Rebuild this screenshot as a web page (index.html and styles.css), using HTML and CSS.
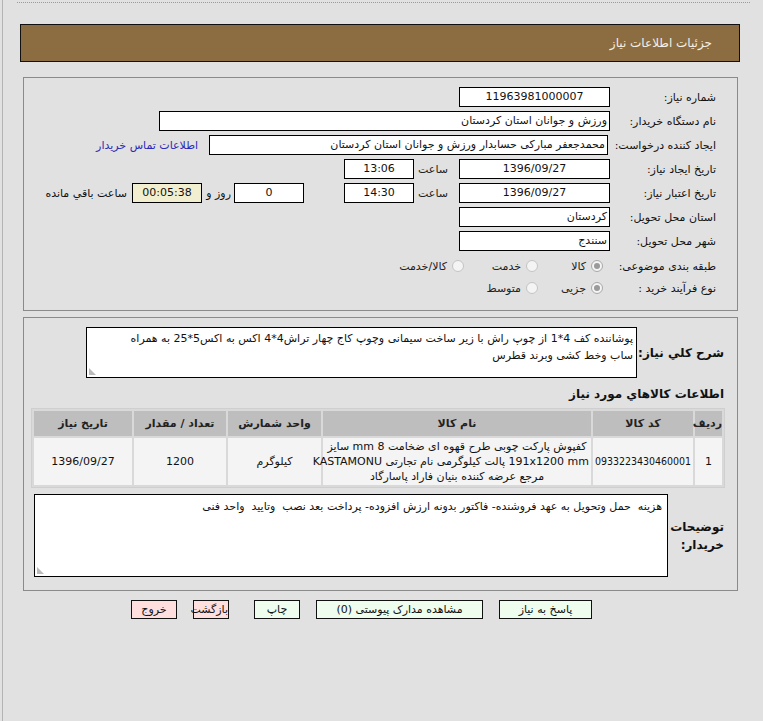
FILE: index.html
```html
<!DOCTYPE html>
<html lang="fa" dir="rtl">
<head>
<meta charset="utf-8">
<title>جزئیات اطلاعات نیاز</title>
<link rel="stylesheet" href="styles.css">
</head>
<body>
<div class="frame">
  <div class="dots"></div>
  <div class="content">
    <div class="header">جزئیات اطلاعات نیاز</div>

    <div class="box box-info">
      <div class="row">
        <span class="lbl">شماره نیاز:</span>
        <span class="field w150 center">11963981000007</span>
      </div>
      <div class="row">
        <span class="lbl">نام دستگاه خریدار:</span>
        <span class="field w451">ورزش و جوانان استان کردستان</span>
      </div>
      <div class="row">
        <span class="lbl lbl-wide">ایجاد کننده درخواست:</span>
        <span class="field w399">محمدجعفر مبارکی حسابدار ورزش و جوانان استان کردستان</span>
        <a class="link" href="#">اطلاعات تماس خریدار</a>
      </div>
      <div class="row">
        <span class="lbl">تاریخ ایجاد نیاز:</span>
        <span class="field w150 center">1396/09/27</span>
        <span class="sep">ساعت</span>
        <span class="field w70 center">13:06</span>
      </div>
      <div class="row">
        <span class="lbl">تاریخ اعتبار نیاز:</span>
        <span class="field w150 center">1396/09/27</span>
        <span class="sep">ساعت</span>
        <span class="field w70 center">14:30</span>
        <span class="field w70 center days">0</span>
        <span class="sep2">روز و</span>
        <span class="field w70 center timer">00:05:38</span>
        <span class="sep3">ساعت باقي مانده</span>
      </div>
      <div class="row">
        <span class="lbl">استان محل تحویل:</span>
        <span class="field w150">کردستان</span>
      </div>
      <div class="row">
        <span class="lbl">شهر محل تحویل:</span>
        <span class="field w150">سنندج</span>
      </div>
      <div class="row radio-row first-radio">
        <span class="lbl">طبقه بندی موضوعی:</span>
        <span class="opt o1"><span class="radio checked"></span><span class="opt-text">کالا</span></span>
        <span class="opt o2"><span class="radio"></span><span class="opt-text">خدمت</span></span>
        <span class="opt"><span class="radio"></span><span class="opt-text">کالا/خدمت</span></span>
      </div>
      <div class="row radio-row">
        <span class="lbl">نوع فرآیند خرید :</span>
        <span class="opt o1"><span class="radio checked"></span><span class="opt-text">جزیی</span></span>
        <span class="opt o2"><span class="radio"></span><span class="opt-text">متوسط</span></span>
      </div>
    </div>

    <div class="box box-items">
      <div class="desc-row">
        <span class="blbl desc-lbl">شرح كلي نياز:</span>
        <div class="area desc-area">پوشاننده کف 4*1 از چوپ راش با زیر ساخت سیمانی وچوپ کاج چهار تراش4*4 اکس به اکس5*25 به همراه<br>ساب وخط کشی وبرند قطرس<span class="grip"></span></div>
      </div>
      <div class="heading">اطلاعات كالاهاي مورد نياز</div>
      <table class="items">
        <thead>
          <tr>
            <th class="c1">رديف</th>
            <th class="c2">کد کالا</th>
            <th class="c3">نام کالا</th>
            <th class="c4">واحد شمارش</th>
            <th class="c5">تعداد / مقدار</th>
            <th class="c6">تاريخ نياز</th>
          </tr>
        </thead>
        <tbody>
          <tr>
            <td>1</td>
            <td class="code">0933223430460001</td>
            <td class="name">کفپوش پارکت چوبی طرح قهوه ای ضخامت 8 mm سایز<br><bdi>191x1200 mm</bdi> پالت کیلوگرمی نام تجارتی KASTAMONU<br>مرجع عرضه کننده بنیان فاراد پاسارگاد</td>
            <td>کیلوگرم</td>
            <td>1200</td>
            <td>1396/09/27</td>
          </tr>
        </tbody>
      </table>
      <div class="notes-row">
        <span class="blbl notes-lbl">توضیحات خریدار:</span>
        <div class="area notes-area">هزینه&nbsp; حمل وتحویل به عهد فروشنده- فاکتور بدونه ارزش افزوده- پرداخت بعد نصب&nbsp; وتایید&nbsp; واحد فنی<span class="grip"></span></div>
      </div>
    </div>

    <div class="buttons">
      <span class="btn green b1">پاسخ به نیاز</span>
      <span class="btn green b2">مشاهده مدارک پیوستی (0)</span>
      <span class="btn green b3">چاپ</span>
      <span class="btn pink b4">بازگشت</span>
      <span class="btn pink b5">خروج</span>
    </div>
  </div>
</div>
</body>
</html>
```

FILE: styles.css
```css
* { box-sizing: border-box; }

html, body {
  margin: 0;
  padding: 0;
  background: #e1e1e1;
}

body {
  font-family: "DejaVu Sans", Tahoma, sans-serif;
  font-size: 11px;
  color: #111;
}

.frame {
  margin-left: 2px;
  border-left: 1px solid #b4b4b4;
  min-height: 721px;
  padding-top: 2px;
}

.dots {
  height: 1px;
  margin: 0 13px 0 14px;
  border-top: 1px dotted #9a9a9a;
}

.content {
  width: 720px;
  margin-right: 23px;
  margin-top: 21px;
}

.header {
  height: 38px;
  background: #8c6d41;
  border: 1px solid #111;
  color: #f4f0e8;
  font-size: 12px;
  line-height: 36px;
  padding-right: 27px;
}

.box {
  margin: 15px 2px 0 3px;
  border: 1px solid #8a8a8a;
}

.box-info {
  padding: 9px 21px 11px 0;
}

.row {
  display: flex;
  align-items: center;
  height: 20px;
  margin-bottom: 4px;
}

.lbl {
  width: 106px;
  flex: none;
  white-space: nowrap;
}

.lbl-wide { width: 108px; }

.field {
  flex: none;
  height: 20px;
  line-height: 18px;
  border: 1px solid #000;
  background: #fff;
  padding: 0 2px;
  white-space: nowrap;
  overflow: hidden;
}

.center { text-align: center; }

.w150 { width: 151px; }
.w451 { width: 451px; }
.w399 { width: 399px; }
.w70 { width: 70px; }

.link {
  color: #2a2ab8;
  text-decoration: none;
  margin-right: 11px;
  white-space: nowrap;
}

.sep {
  width: 45px;
  padding-right: 11px;
  flex: none;
  color: #222;
}

.days { margin-right: 40px; }

.sep2 {
  width: 32px;
  padding-right: 3px;
  flex: none;
}

.timer {
  background: #f1efcf;
}

.sep3 {
  padding-right: 5px;
  white-space: nowrap;
}

.radio-row {
  height: 22px;
  margin-bottom: 0;
}

.first-radio { margin-top: 2px; }

.opt {
  display: flex;
  align-items: center;
  flex: none;
}

.o1 { width: 65px; }
.o2 { width: 74px; }

.radio {
  width: 12px;
  height: 12px;
  border-radius: 50%;
  border: 1px solid #c4c4c4;
  background: #f4f4f4;
  margin-right: 7px;
  margin-left: 5px;
  flex: none;
  position: relative;
}

.radio.checked {
  border-color: #a8a8a8;
}

.radio.checked::after {
  content: "";
  position: absolute;
  left: 2px;
  top: 2px;
  width: 6px;
  height: 6px;
  border-radius: 50%;
  background: #9a9a9a;
}

.opt-text { color: #222; white-space: nowrap; }

/* second box */
.box-items {
  margin-top: 6px;
  padding: 9px 0 13px 0;
}

.blbl {
  font-weight: bold;
  font-size: 12px;
  color: #111;
}

.desc-row {
  display: flex;
  align-items: center;
}

.desc-lbl {
  width: 100px;
  padding-right: 13px;
  flex: none;
}

.area {
  position: relative;
  background: #fff;
  border: 1px solid #000;
  line-height: 17px;
  padding: 2px 3px;
}

.desc-area {
  width: 551px;
  height: 51px;
  white-space: nowrap;
  overflow: hidden;
}

.grip {
  position: absolute;
  left: 2px;
  bottom: 2px;
  width: 7px;
  height: 7px;
  background-image: radial-gradient(circle, #b8b8b8 0.7px, transparent 0.9px);
  background-size: 2px 2px;
  clip-path: polygon(0 0, 0 100%, 100% 100%);
}

.heading {
  font-weight: bold;
  font-size: 12px;
  padding-right: 13px;
  margin-top: 8px;
  height: 22px;
  line-height: 16px;
}

.items {
  margin-right: 12px;
  border-collapse: separate;
  border-spacing: 2px;
  background: #d9d9d9;
  border: 1px solid #cfcfcf;
  width: 690px;
  table-layout: fixed;
}

.items th {
  background: #bebebe;
  font-weight: bold;
  height: 25px;
  color: #222;
  padding: 0;
}

.items td {
  background: #f4f4f4;
  text-align: center;
  height: 47px;
  padding: 0 3px;
  line-height: 15px;
}

.c1 { width: 27px; }
.c2 { width: 100px; }
.c3 { width: 268px; }
.c4 { width: 93px; }
.c5 { width: 92px; }
.c6 { width: 98px; }

.items td.code {
  padding: 0;
  font-family: "DejaVu Sans Condensed", "DejaVu Sans", sans-serif;
  font-size: 10.5px;
  white-space: nowrap;
}

.items td.name { padding: 0 2px; white-space: nowrap; }

.notes-row {
  display: flex;
  align-items: center;
  margin-top: 6px;
}

.notes-lbl {
  width: 69px;
  padding-right: 13px;
  flex: none;
  line-height: 18px;
}

.notes-area {
  width: 634px;
  height: 83px;
  padding: 3px 5px;
}

.buttons {
  display: flex;
  padding-right: 148px;
  margin-top: 9px;
}

.btn {
  height: 19px;
  border: 1px solid #111;
  font-size: 11px;
  line-height: 17px;
  text-align: center;
  margin-left: 16px;
  white-space: nowrap;
}

.green { background: #eefdee; }
.pink { background: #ffdede; }

.b1 { width: 93px; }
.b2 { width: 167px; }
.b3 { width: 46px; margin-left: 25px; }
.b4 { width: 36px; }
.b5 { width: 46px; }
```
